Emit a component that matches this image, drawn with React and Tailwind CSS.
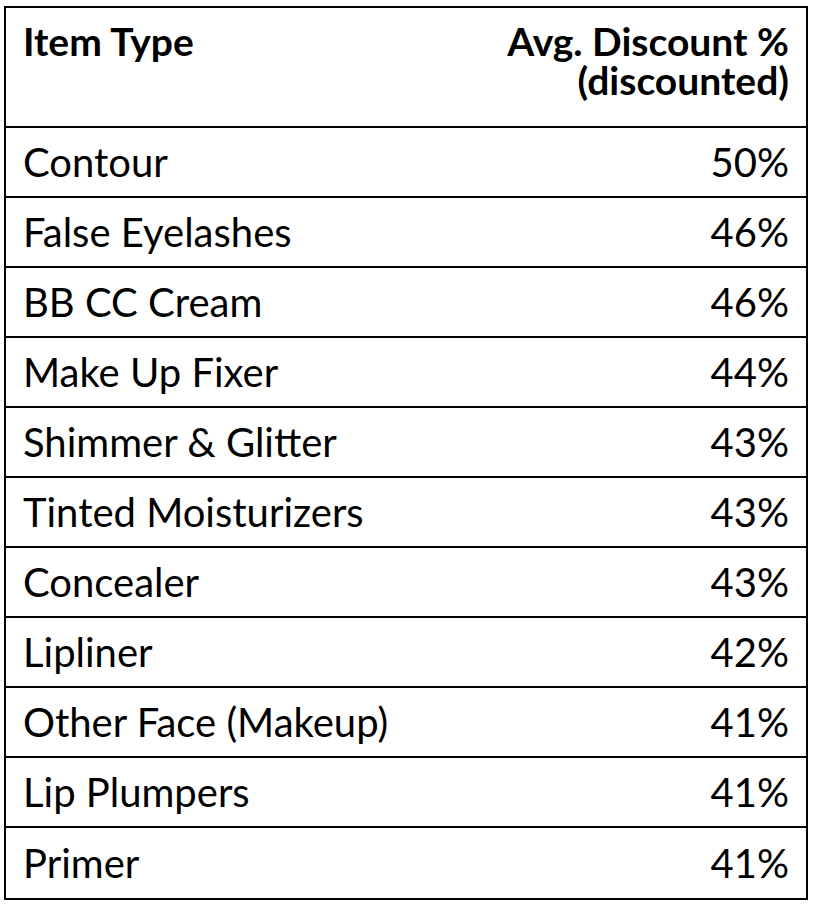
import React from 'react';

const rows = [
  ['Contour', '50%'],
  ['False Eyelashes', '46%'],
  ['BB CC Cream', '46%'],
  ['Make Up Fixer', '44%'],
  ['Shimmer & Glitter', '43%'],
  ['Tinted Moisturizers', '43%'],
  ['Concealer', '43%'],
  ['Lipliner', '42%'],
  ['Other Face (Makeup)', '41%'],
  ['Lip Plumpers', '41%'],
  ['Primer', '41%'],
];

export default function App() {
  return (
    <div className="min-h-[904px] bg-white pt-[6px] pl-[4px] text-black font-['Lato',sans-serif]">
      <div className="w-[804px] border-2 border-black">
        {/* header */}
        <div className="flex justify-between h-[120px] px-[17px] pt-[14px] text-[39px] leading-[39px] font-bold border-b-2 border-black">
          <div>Item Type</div>
          <div className="text-right">
            Avg. Discount %
            <br />
            (discounted)
          </div>
        </div>

        {rows.map(([name, pct], i) => (
          <div
            key={name}
            className={
              'flex items-center justify-between h-[70px] px-[17px] text-[40px] leading-[48px] ' +
              (i < rows.length - 1 ? 'border-b-2 border-black' : '')
            }
          >
            <span>{name}</span>
            <span>{pct}</span>
          </div>
        ))}
      </div>
    </div>
  );
}
